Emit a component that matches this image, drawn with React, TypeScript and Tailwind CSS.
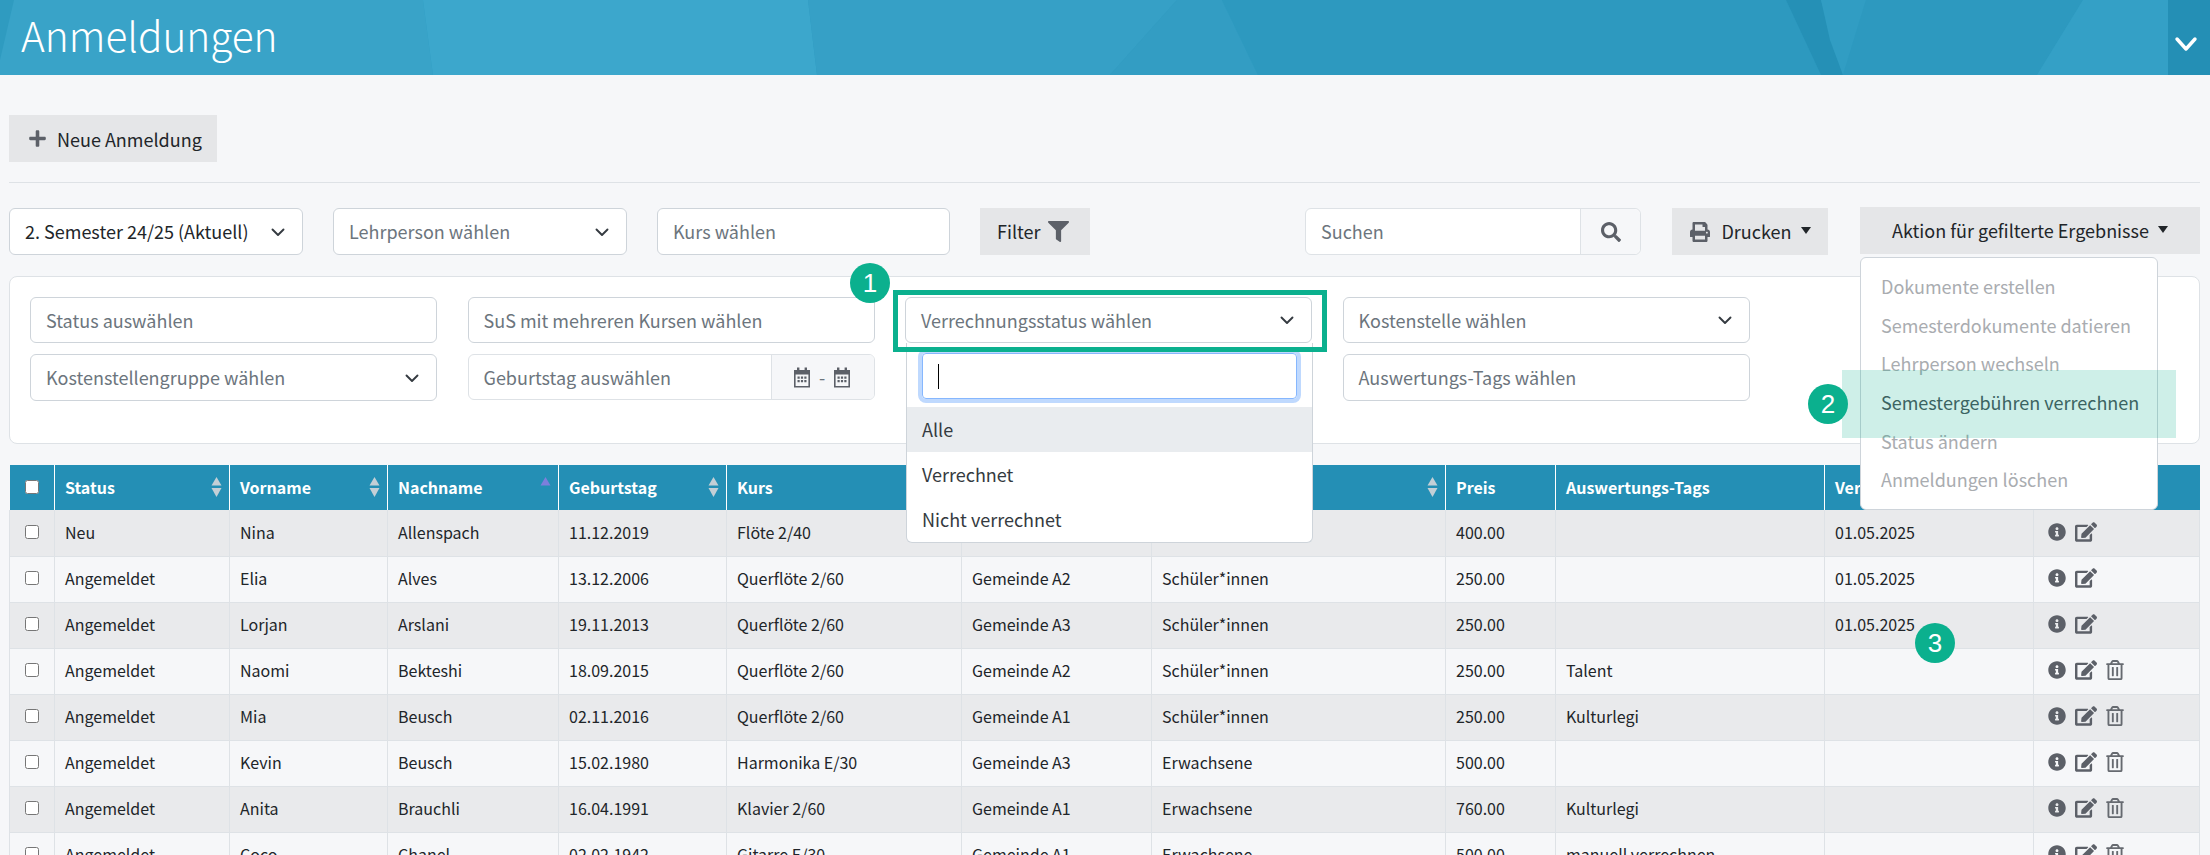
import { FaPlus, FaFilter, FaPrint, FaSearch, FaInfoCircle, FaEdit, FaRegTrashAlt } from "react-icons/fa";

const rows = [
  ["Neu", "Nina", "Allenspach", "11.12.2019", "Flöte 2/40", "Gemeinde A1", "Schüler*innen", "400.00", "", "01.05.2025"],
  ["Angemeldet", "Elia", "Alves", "13.12.2006", "Querflöte 2/60", "Gemeinde A2", "Schüler*innen", "250.00", "", "01.05.2025"],
  ["Angemeldet", "Lorjan", "Arslani", "19.11.2013", "Querflöte 2/60", "Gemeinde A3", "Schüler*innen", "250.00", "", "01.05.2025"],
  ["Angemeldet", "Naomi", "Bekteshi", "18.09.2015", "Querflöte 2/60", "Gemeinde A2", "Schüler*innen", "250.00", "Talent", ""],
  ["Angemeldet", "Mia", "Beusch", "02.11.2016", "Querflöte 2/60", "Gemeinde A1", "Schüler*innen", "250.00", "Kulturlegi", ""],
  ["Angemeldet", "Kevin", "Beusch", "15.02.1980", "Harmonika E/30", "Gemeinde A3", "Erwachsene", "500.00", "", ""],
  ["Angemeldet", "Anita", "Brauchli", "16.04.1991", "Klavier 2/60", "Gemeinde A1", "Erwachsene", "760.00", "Kulturlegi", ""],
  ["Angemeldet", "Coco", "Chanel", "02.02.1942", "Gitarre E/30", "Gemeinde A1", "Erwachsene", "500.00", "manuell verrechnen", ""],
];

const widths = [45, 175, 158, 171, 168, 235, 190, 294, 110, 269, 209, 166];

const headers = [
  { label: "Status", sort: "both" },
  { label: "Vorname", sort: "both" },
  { label: "Nachname", sort: "asc" },
  { label: "Geburtstag", sort: "both" },
  { label: "Kurs", sort: "both" },
  { label: "Kostenstelle", sort: "both" },
  { label: "Tarif", sort: "both" },
  { label: "Preis", sort: "" },
  { label: "Auswertungs-Tags", sort: "" },
  { label: "Verrechnet am", sort: "" },
  { label: "", sort: "" },
];

const menuItems = ["Dokumente erstellen", "Semesterdokumente datieren", "Lehrperson wechseln", "Semestergebühren verrechnen", "Status ändern", "Anmeldungen löschen"];

function Chevron() {
  return (
    <svg width="14" height="9" viewBox="0 0 14 9" fill="none" className="mt-px shrink-0">
      <path d="M1.5 1.5 7 7l5.5-5.5" stroke="#343a40" strokeWidth="1.9" strokeLinecap="round" strokeLinejoin="round" />
    </svg>
  );
}

function Caret() {
  return <span className="ml-[9px] mt-[-2px] inline-block h-0 w-0 border-x-[5.5px] border-t-[7px] border-x-transparent border-t-[#212529]" />;
}

function SortIcon({ sort }: { sort: string }) {
  if (!sort) return null;
  return (
    <svg width="11" height="20" viewBox="0 0 11 20" className="absolute right-[7px] top-[12px]">
      <path d="M5.5 0 10.5 8.5H.5z" fill={sort === "asc" ? "#7c7fdc" : "#c3cfd6"} />
      {sort === "both" && <path d="M5.5 20 10.5 11H.5z" fill="#c3cfd6" />}
    </svg>
  );
}

function CalendarIcon() {
  return (
    <svg width="18" height="21" viewBox="0 0 18 21" fill="#5c6068" className="shrink-0">
      <rect x="4" y="0.5" width="2.4" height="4" />
      <rect x="11.6" y="0.5" width="2.4" height="4" />
      <path d="M1 3h16v17.5H1zM2.6 7.5v11.4h12.8V7.5z" fillRule="evenodd" />
      <path d="M4.5 9.5h2.2v2.2H4.5zM7.9 9.5h2.2v2.2H7.9zM11.3 9.5h2.2v2.2h-2.2zM4.5 13h2.2v2.2H4.5zM7.9 13h2.2v2.2H7.9zM11.3 13h2.2v2.2h-2.2z" />
    </svg>
  );
}

function Select({ label, chevron = false, dark = false, className = "" }: { label: string; chevron?: boolean; dark?: boolean; className?: string }) {
  return (
    <div className={`flex items-center justify-between rounded-[6px] border border-[#ced4da] bg-white pl-[15px] pr-[17px] text-[18px] ${dark ? "text-[#212529]" : "text-[#6c757d]"} ${className}`}>
      <span className="mb-px whitespace-nowrap">{label}</span>
      {chevron && <Chevron />}
    </div>
  );
}

function Badge({ n, className }: { n: number; className: string }) {
  return (
    <div className={`absolute z-40 flex h-[40px] w-[40px] items-center justify-center rounded-full bg-[#0bb08e] font-['Liberation_Sans',sans-serif] text-[26px] leading-none text-white ${className}`}>
      {n}
    </div>
  );
}

function Header() {
  return (
    <header className="relative flex h-[75px] shrink-0 items-center overflow-hidden bg-[#2f9bc1]">
      <svg className="absolute inset-0 h-full w-full" viewBox="0 0 2210 75" preserveAspectRatio="none">
        <polygon points="0,0 423,0 433,75 0,75" fill="#39a3c8" />
        <polygon points="0,0 14,0 0,60" fill="#2f9bc0" />
        <polygon points="423,0 808,0 817,75 433,75" fill="#3ca7cc" />
        <polygon points="808,0 1177,0 1110,75 817,75" fill="#36a0c6" />
        <polygon points="1177,0 1222,0 1258,75 1110,75" fill="#339dc3" />
        <polygon points="1222,0 1786,0 1821,75 1258,75" fill="#2d99bf" />
        <polygon points="1786,0 1821,0 1843,75 1821,75" fill="#2590b6" />
        <polygon points="1821,0 1866,0 1843,75 1830,40" fill="#319dc3" />
        <polygon points="1866,0 2083,0 2037,75 1843,75" fill="#2d99bf" />
        <polygon points="2083,0 2168,0 2168,75 2037,75" fill="#34a0c6" />
      </svg>
      <h1 className="relative mb-[4px] ml-[21px] text-[40.5px] font-light leading-none text-white">Anmeldungen</h1>
      <div className="absolute right-0 top-0 flex h-full w-[42px] items-end justify-center bg-[#248fb5] pb-[23px] pr-[7px]">
        <svg width="24" height="16" viewBox="0 0 24 16" fill="none">
          <path d="M3 3l9 10 9-10" stroke="#fff" strokeWidth="3.4" strokeLinecap="round" strokeLinejoin="round" />
        </svg>
      </div>
    </header>
  );
}

function Toolbar() {
  return (
    <div className="mt-[25px] flex h-[47px]">
      <Select label="2. Semester 24/25 (Aktuell)" chevron dark className="w-[294px]" />
      <Select label="Lehrperson wählen" chevron className="ml-[30px] w-[294px]" />
      <Select label="Kurs wählen" className="ml-[30px] w-[293px]" />
      <button className="ml-[30px] flex w-[110px] items-center gap-[8px] bg-[#e5e6e8] pl-[17px] text-[18px] text-[#212529]">
        <span className="mb-px">Filter</span> <FaFilter size={21} color="#5c6068" />
      </button>
      <div className="ml-[215px] flex w-[336px] rounded-[6px] border border-[#dee2e6] bg-white text-[18px] text-[#6c757d]">
        <div className="mb-px flex flex-1 items-center pl-[15px]">Suchen</div>
        <div className="flex w-[60px] items-center justify-center rounded-r-[6px] border-l border-[#dee2e6] bg-[#f6f7f9]">
          <FaSearch size={20} color="#5c6068" />
        </div>
      </div>
      <button className="ml-[31px] flex w-[156px] items-center justify-center bg-[#e5e6e8] pl-px text-[18px] text-[#212529]">
        <FaPrint size={20} color="#5c6068" className="mr-[11px]" /> <span className="mb-px">Drucken</span> <Caret />
      </button>
      <div className="relative ml-[32px] -mt-px w-[340px]">
        <button className="flex h-[47px] w-full items-center justify-center bg-[#e5e6e8] text-[18px] text-[#212529]">
          <span className="mb-px">Aktion für gefilterte Ergebnisse</span> <Caret />
        </button>
        <div className="absolute left-0 top-[50px] z-20 h-[253px] w-[298px] rounded-[6px] border border-[#ced4da] bg-white pt-[9px] text-[18px] text-[#a9acb0]">
          {menuItems.map((item) => (
            <div key={item} className={`flex h-[38.6px] items-center whitespace-nowrap pl-[20px] ${item.startsWith("Semestergeb") ? "text-[#495057]" : ""}`}>
              {item}
            </div>
          ))}
        </div>
      </div>
    </div>
  );
}

function FilterPanel() {
  return (
    <div className="mt-[21px] h-[168px] rounded-[8px] border border-[#dee2e6] bg-white pl-[20px] pt-[20px]">
      <div className="grid grid-cols-[407px_407px_407px_407px] gap-x-[30.5px] gap-y-[11px]">
        <Select label="Status auswählen" className="h-[46px]" />
        <Select label="SuS mit mehreren Kursen wählen" className="h-[46px]" />
        <div className="relative">
          <Select label="Verrechnungsstatus wählen" chevron className="h-[46px]" />
          <div className="absolute -left-[12px] -right-[15px] -top-[7px] -bottom-[9px] z-30 border-[5px] border-[#0bb08e]" />
          <div className="absolute left-[1px] -right-[1px] top-[46px] z-20 h-[200px] rounded-b-[6px] border border-t-0 border-[#ced4da] bg-white text-[18px] text-[#343a40]">
            <div className="mx-[15px] mt-[10px] flex h-[46px] items-center rounded-[4px] border border-[#86b7fe] pl-[15px] shadow-[0_0_0_4px_#bfd9fe]">
              <span className="h-[25px] w-px bg-black" />
            </div>
            <div className="mt-[8px] flex h-[45px] items-center bg-[#e9ecef] pb-[2px] pl-[15px]">Alle</div>
            <div className="flex h-[45px] items-center pb-[2px] pl-[15px]">Verrechnet</div>
            <div className="flex h-[45px] items-center pb-[2px] pl-[15px]">Nicht verrechnet</div>
          </div>
        </div>
        <Select label="Kostenstelle wählen" chevron className="h-[46px]" />
        <Select label="Kostenstellengruppe wählen" chevron className="h-[47px]" />
        <div className="flex h-[46px] overflow-hidden rounded-[6px] border border-[#dee2e6] bg-white text-[18px] text-[#6c757d]">
          <div className="mb-px flex flex-1 items-center whitespace-nowrap pl-[15px]">Geburtstag auswählen</div>
          <div className="flex w-[103px] items-center justify-center gap-[8px] border-l border-[#dee2e6] bg-[#f6f7f9] pr-px">
            <CalendarIcon /> - <CalendarIcon />
          </div>
        </div>
        <div />
        <Select label="Auswertungs-Tags wählen" className="h-[47px]" />
      </div>
    </div>
  );
}

function DataTable() {
  return (
    <table className="mt-[21px] w-[2190px] table-fixed border-collapse text-[16px] text-[#212529]">
      <colgroup>
        {widths.map((w, i) => (
          <col key={i} style={{ width: w }} />
        ))}
      </colgroup>
      <thead>
        <tr className="h-[45px] bg-[#248fb5] text-white">
          <th className="border-r border-white pb-[5px] text-center">
            <input type="checkbox" className="h-[14px] w-[14px] align-middle" />
          </th>
          {headers.map((h, i) => (
            <th key={i} className="relative border-r border-white pb-[2px] pl-[10px] text-left font-semibold last:border-r-0">
              {h.label}
              <SortIcon sort={h.sort} />
            </th>
          ))}
        </tr>
      </thead>
      <tbody>
        {rows.map((row, r) => (
          <tr key={r} className={`h-[46px] border-b border-[#dee2e6] ${r % 2 === 0 ? "bg-[#e9eaec]" : "bg-[#f6f7f9]"}`}>
            <td className="border-x border-[#dee2e6] pb-[5px] text-center">
              <input type="checkbox" className="h-[14px] w-[14px] align-middle" />
            </td>
            {row.map((cell, c) => (
              <td key={c} className="overflow-hidden whitespace-nowrap border-r border-[#dee2e6] pb-[2px] pl-[10px]">
                {cell}
              </td>
            ))}
            <td className="border-r border-[#dee2e6] pb-[2px] pl-[14px]">
              <div className="flex items-center text-[#5c6068]">
                <FaInfoCircle size={18} />
                <FaEdit size={22} className="ml-[9px]" />
                {r > 2 && <FaRegTrashAlt size={20} color="#666a70" className="ml-[8px]" />}
              </div>
            </td>
          </tr>
        ))}
      </tbody>
    </table>
  );
}

export default function App() {
  return (
    <div className="relative flex h-[855px] w-[2210px] flex-col overflow-hidden bg-[#f6f7f9] font-['Noto_Sans_CJK_SC','Liberation_Sans',sans-serif] leading-none">
      <Header />
      <main className="pl-[9px] pr-[10px]">
        <button className="mt-[40px] flex h-[47px] w-[208px] items-center gap-[10px] bg-[#e5e6e8] pl-[19px] text-[18px] text-[#212529]">
          <FaPlus size={19} color="#5c6068" /> <span>Neue Anmeldung</span>
        </button>
        <hr className="mt-[20px] border-[#dee2e6]" />
        <Toolbar />
        <FilterPanel />
        <DataTable />
      </main>
      <div className="absolute left-[1842px] top-[370px] z-30 h-[68px] w-[334px] bg-[#0bb08e]/20" />
      <Badge n={1} className="left-[850px] top-[263px]" />
      <Badge n={2} className="left-[1808px] top-[384px]" />
      <Badge n={3} className="left-[1915px] top-[623px]" />
    </div>
  );
}
